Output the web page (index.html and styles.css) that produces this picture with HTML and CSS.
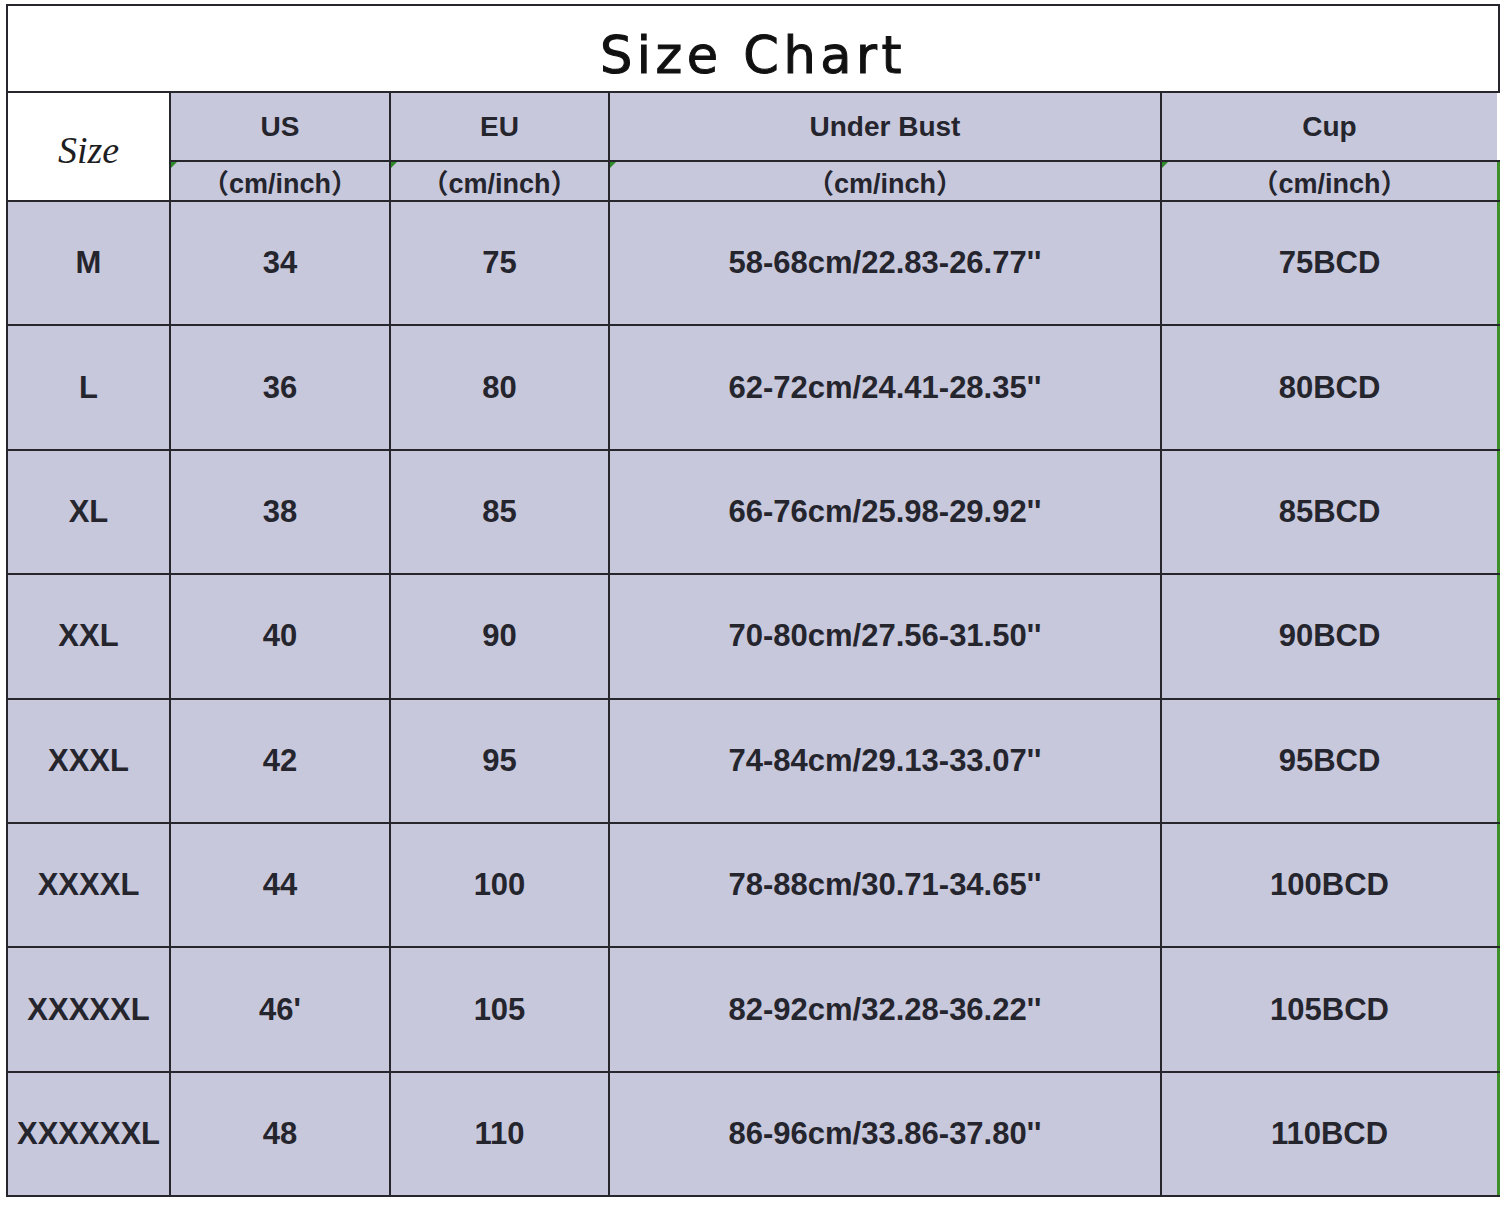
FILE: index.html
```html
<!DOCTYPE html>
<html>
<head>
<meta charset="utf-8">
<link rel="stylesheet" href="styles.css">
</head>
<body>
<div class="chart">
  <div class="title">Size Chart</div>
  <div class="size-head">Size</div>
  <div class="hd">US</div>
  <div class="hd">EU</div>
  <div class="hd">Under Bust</div>
  <div class="hd last-hd">Cup</div>
  <div class="sub">（cm/inch）</div>
  <div class="sub">（cm/inch）</div>
  <div class="sub">（cm/inch）</div>
  <div class="sub last">（cm/inch）</div>

  <div class="cell">M</div><div class="cell">34</div><div class="cell">75</div><div class="cell">58-68cm/22.83-26.77''</div><div class="cell last">75BCD</div>
  <div class="cell">L</div><div class="cell">36</div><div class="cell">80</div><div class="cell">62-72cm/24.41-28.35''</div><div class="cell last">80BCD</div>
  <div class="cell">XL</div><div class="cell">38</div><div class="cell">85</div><div class="cell">66-76cm/25.98-29.92''</div><div class="cell last">85BCD</div>
  <div class="cell">XXL</div><div class="cell">40</div><div class="cell">90</div><div class="cell">70-80cm/27.56-31.50''</div><div class="cell last">90BCD</div>
  <div class="cell">XXXL</div><div class="cell">42</div><div class="cell">95</div><div class="cell">74-84cm/29.13-33.07''</div><div class="cell last">95BCD</div>
  <div class="cell">XXXXL</div><div class="cell">44</div><div class="cell">100</div><div class="cell">78-88cm/30.71-34.65''</div><div class="cell last">100BCD</div>
  <div class="cell">XXXXXL</div><div class="cell">46'</div><div class="cell">105</div><div class="cell">82-92cm/32.28-36.22''</div><div class="cell last">105BCD</div>
  <div class="cell">XXXXXXL</div><div class="cell">48</div><div class="cell">110</div><div class="cell">86-96cm/33.86-37.80''</div><div class="cell last">110BCD</div>
</div>
</body>
</html>
```
FILE: styles.css
```css
html, body {
  margin: 0;
  padding: 0;
  background: #ffffff;
}

.chart {
  margin: 4px 0 0 6px;
  width: 1494px;
  display: grid;
  grid-template-columns: 161px 218px 217px 550px 338px;
  grid-template-rows: 85px 67px 38px repeat(8, 122.4px);
  gap: 2px;
  padding: 2px 0 2px 2px;
  box-sizing: border-box;
  background: #26262c;
  font-family: "Liberation Sans", Arial, sans-serif;
  color: #25252e;
}

.chart > div {
  display: flex;
  align-items: center;
  justify-content: center;
  background: #c8c8dc;
  box-sizing: border-box;
  position: relative;
  white-space: nowrap;
}

.chart > .title {
  grid-column: 1 / -1;
  background: #ffffff;
  border-right: 2px solid #26262c;
  font-family: "DejaVu Sans", sans-serif;
  font-size: 51px;
  letter-spacing: 4.5px;
  -webkit-text-stroke: 1px #111111;
  color: #111111;
  padding-top: 14px;
}

.chart > .size-head {
  grid-row: span 2;
  background: #ffffff;
  font-family: "Liberation Serif", "Times New Roman", serif;
  font-style: italic;
  font-size: 38px;
  color: #1e1e22;
  padding-top: 6px;
}

.hd {
  font-size: 28px;
  font-weight: bold;
}

.chart > .last-hd {
  border-right: 3px solid #ffffff;
}

.sub {
  font-family: "Liberation Sans", "Noto Sans CJK SC", sans-serif;
  font-size: 27px;
  font-weight: bold;
}

.sub::before {
  content: "";
  position: absolute;
  left: 0;
  top: 0;
  border-top: 6px solid #2f8a2a;
  border-right: 6px solid transparent;
}

.cell {
  font-size: 31px;
  font-weight: bold;
}

.chart > .last {
  border-right: 3px solid #3f8f2a;
}
```
